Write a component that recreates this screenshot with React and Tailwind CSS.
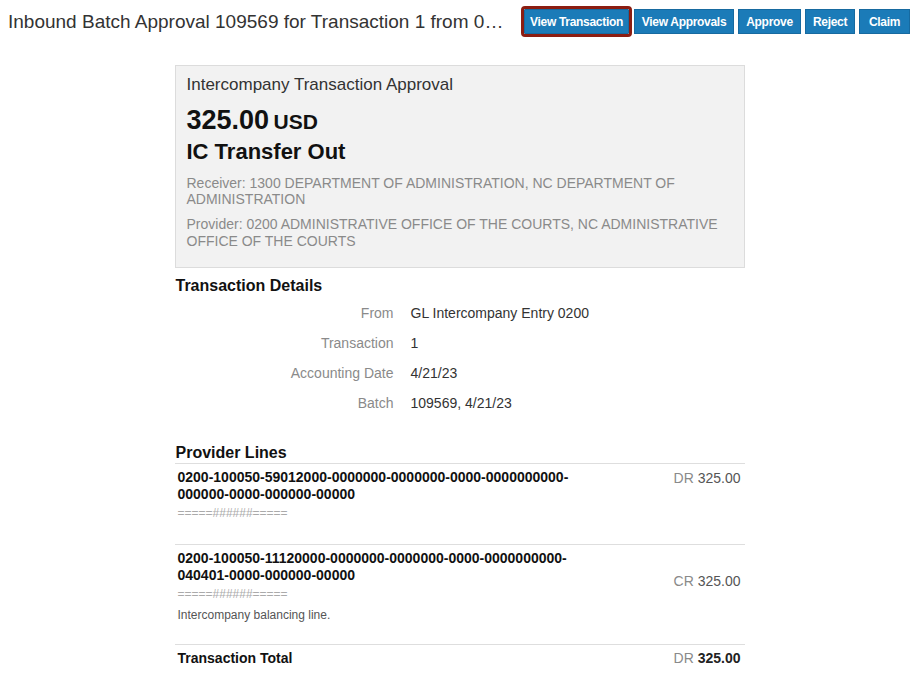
import React from "react";

const buttons = [
  { label: "View Transaction", w: "w-[105px]" },
  { label: "View Approvals", w: "w-[100px]" },
  { label: "Approve", w: "w-[63px]" },
  { label: "Reject", w: "w-[50px]" },
  { label: "Claim", w: "w-[51px]" },
];

const details = [
  ["From", "GL Intercompany Entry 0200"],
  ["Transaction", "1"],
  ["Accounting Date", "4/21/23"],
  ["Batch", "109569, 4/21/23"],
];

const Amount = ({ side, value, bold }) => (
  <div className="text-[14px] leading-[16px] whitespace-nowrap">
    <span className="text-[#8a8a8a]">{side}</span>{" "}
    <span className={bold ? "font-bold text-[#222]" : "text-[#555]"}>{value}</span>
  </div>
);

export default function App() {
  return (
    <div className="min-h-screen bg-white font-['Liberation_Sans',Arial,sans-serif] text-[#333]">
      {/* Header */}
      <div className="flex items-center h-[43px] pl-[8px] pr-[9px] gap-[16px]">
        <h1 className="flex-1 min-w-0 truncate text-[19px] text-[#333] leading-[24px]">
          Inbound Batch Approval 109569 for Transaction 1 from 0200 ADMINISTRATIVE OFFICE OF THE COURTS
        </h1>
        <div className="flex items-center gap-[4px]">
          {buttons.map((b, i) => (
            <button
              key={b.label}
              className={
                b.w +
                " h-[25px] shrink-0 bg-[#1b7bb8] text-white text-[12px] font-bold leading-none tracking-[-0.3px] whitespace-nowrap border border-[#176aa0] " +
                (i === 0 ? "outline-[3px] outline-solid outline-[#8c1d12] rounded-[1px] mr-[1px]" : "")
              }
            >
              {b.label}
            </button>
          ))}
        </div>
      </div>

      {/* Content column */}
      <div className="w-[570px] mx-auto mt-[22px]">
        {/* Summary card */}
        <div className="bg-[#f2f2f2] border border-[#dcdcdc] px-[11px] pt-[9px] pb-[17px]">
          <div className="text-[17px] text-[#333] leading-[20px]">Intercompany Transaction Approval</div>
          <div className="mt-[11px] font-bold text-[#111] leading-[29px]">
            <span className="text-[27px]">325.00</span> <span className="text-[21px]">USD</span>
          </div>
          <div className="font-bold text-[22px] text-[#111] leading-[28px]">IC Transfer Out</div>
          <div className="mt-[9px] text-[14px] leading-[16px] text-[#8a8a8a]">
            Receiver: 1300 DEPARTMENT OF ADMINISTRATION, NC DEPARTMENT OF ADMINISTRATION
          </div>
          <div className="mt-[9px] pr-[10px] text-[14px] leading-[17px] text-[#8a8a8a]">
            Provider: 0200 ADMINISTRATIVE OFFICE OF THE COURTS, NC ADMINISTRATIVE OFFICE OF THE COURTS
          </div>
        </div>

        {/* Transaction details */}
        <div className="mt-[6px] text-[16px] font-bold text-[#111] pl-[1px]">Transaction Details</div>
        <div className="mt-[5px] flex flex-col gap-[10px]">
          {details.map(([k, v]) => (
            <div key={k} className="flex text-[14px] leading-[20px]">
              <div className="w-[219px] text-right text-[#8a8a8a]">{k}</div>
              <div className="pl-[17px] text-[#333]">{v}</div>
            </div>
          ))}
        </div>

        {/* Provider lines */}
        <div className="mt-[30px] text-[16px] font-bold text-[#111] pl-[1px] leading-[20px]">Provider Lines</div>
        <div className="border-t border-[#dedede]">
          <div className="flex justify-between pl-[3px] pr-[4px] pt-[5px] pb-[24px]">
            <div>
              <div className="text-[14px] font-bold text-[#111] leading-[17px] w-[410px]">
                0200-100050-59012000-0000000-0000000-0000-0000000000-000000-0000-000000-00000
              </div>
              <div className="mt-[3px] text-[12px] text-[#aaa] leading-[14px]">=====######=====</div>
            </div>
            <div className="pt-[1px]">
              <Amount side="DR" value="325.00" />
            </div>
          </div>
          <div className="border-t border-[#dedede] flex justify-between pl-[3px] pr-[4px] pt-[5px] pb-[22px]">
            <div>
              <div className="text-[14px] font-bold text-[#111] leading-[17px] w-[410px]">
                0200-100050-11120000-0000000-0000000-0000-0000000000-040401-0000-000000-00000
              </div>
              <div className="mt-[3px] text-[12px] text-[#aaa] leading-[14px]">=====######=====</div>
              <div className="mt-[7px] text-[12px] text-[#555] leading-[14px]">Intercompany balancing line.</div>
            </div>
            <div className="pt-[23px]">
              <Amount side="CR" value="325.00" />
            </div>
          </div>
          <div className="border-t border-[#dedede] flex justify-between pl-[3px] pr-[4px] pt-[5px]">
            <div className="text-[14px] font-bold text-[#111] leading-[16px]">Transaction Total</div>
            <Amount side="DR" value="325.00" bold />
          </div>
        </div>
      </div>
    </div>
  );
}
